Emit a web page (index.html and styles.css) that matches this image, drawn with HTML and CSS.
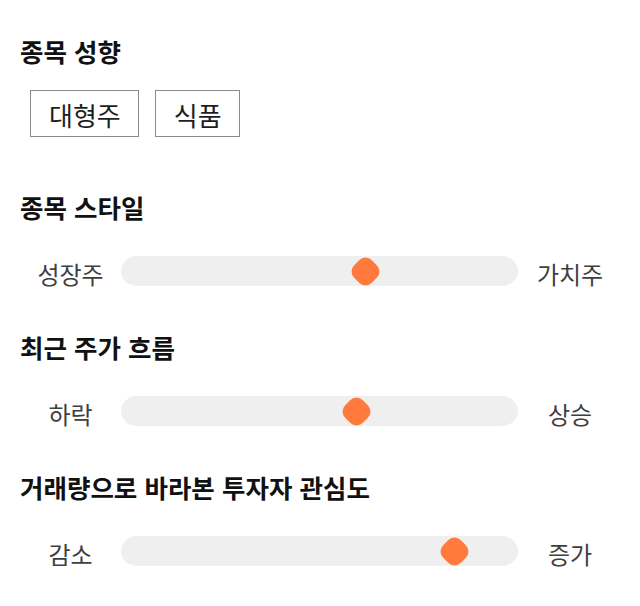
FILE: index.html
```html
<!DOCTYPE html>
<html lang="ko">
<head>
<meta charset="utf-8">
<link rel="stylesheet" href="styles.css">
</head>
<body>
<div class="page">
  <section class="sec sec-first">
    <h2 class="title">종목 성향</h2>
    <div class="chips">
      <span class="chip">대형주</span>
      <span class="chip">식품</span>
    </div>
  </section>
  <section class="sec sec-after-chips">
    <h2 class="title">종목 스타일</h2>
    <div class="row">
      <span class="lab">성장주</span>
      <div class="track"><span class="thumb" style="left: 61.5%"></span></div>
      <span class="lab">가치주</span>
    </div>
  </section>
  <section class="sec">
    <h2 class="title">최근 주가 흐름</h2>
    <div class="row">
      <span class="lab">하락</span>
      <div class="track"><span class="thumb" style="left: 59.4%"></span></div>
      <span class="lab">상승</span>
    </div>
  </section>
  <section class="sec">
    <h2 class="title">거래량으로 바라본 투자자 관심도</h2>
    <div class="row">
      <span class="lab">감소</span>
      <div class="track"><span class="thumb" style="left: 84.1%"></span></div>
      <span class="lab">증가</span>
    </div>
  </section>
</div>
</body>
</html>
```
FILE: styles.css
```css
html, body {
  margin: 0;
  padding: 0;
  background: #ffffff;
}
body {
  font-family: "Noto Sans CJK KR", "Noto Sans", sans-serif;
  color: #222;
  min-height: 606px;
}
.page {
  padding: 36px 18px 36px 20px;
}
.sec {
  margin-top: 49px;
}
.sec-first {
  margin-top: 0;
}
.sec-after-chips {
  margin-top: 55px;
}
.title {
  margin: 0;
  font-size: 25.5px;
  line-height: 30px;
  font-weight: 700;
  color: #111;
}
.chips {
  display: flex;
  gap: 16px;
  margin-top: 24px;
  padding-left: 10px;
}
.chip {
  box-sizing: border-box;
  height: 47px;
  padding: 3px 17px 0 18px;
  border: 1px solid #8a8a8a;
  font-size: 26px;
  line-height: 42px;
  color: #1e1e1e;
}
.row {
  display: grid;
  grid-template-columns: 101px 1fr 104px;
  align-items: center;
  margin-top: 31px;
  height: 30px;
}
.lab {
  text-align: center;
  font-size: 24px;
  line-height: 30px;
  color: #3f3f3f;
  padding-top: 6px;
}
.track {
  position: relative;
  height: 30px;
  background: #efefef;
  border-radius: 16px / 15px;
}
.thumb {
  position: absolute;
  top: 50%;
  width: 25px;
  height: 25px;
  margin-left: -12.5px;
  margin-top: -12.5px;
  background: #ff7a3c;
  border-radius: 9px;
  transform: rotate(45deg);
}
```
